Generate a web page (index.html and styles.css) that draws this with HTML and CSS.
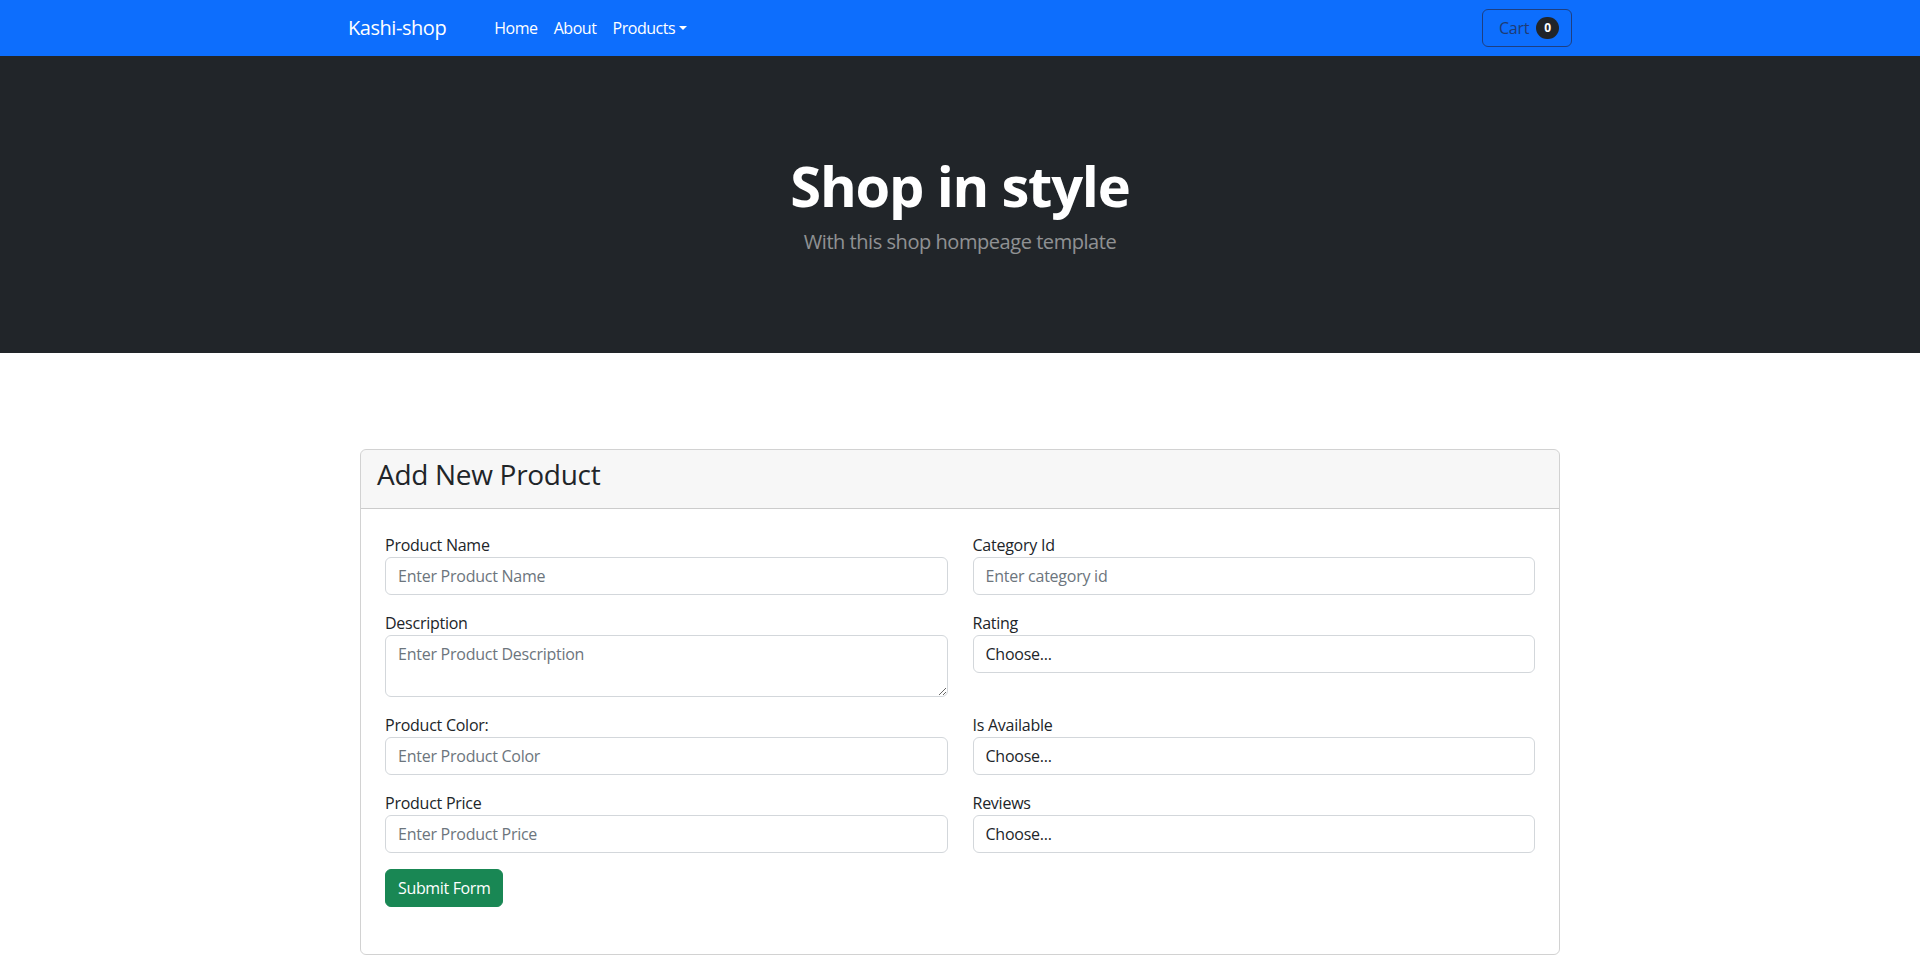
FILE: index.html
```html
<!DOCTYPE html>
<html lang="en">
<head>
<meta charset="utf-8">
<title>Kashi-shop</title>
<link rel="stylesheet" href="styles.css">
</head>
<body>
<nav class="navbar">
  <div class="nav-container">
    <a class="brand" href="#">Kashi-shop</a>
    <ul class="nav-links">
      <li><a href="#">Home</a></li>
      <li><a href="#">About</a></li>
      <li><a href="#" class="dropdown">Products</a></li>
    </ul>
    <button class="cart-btn" type="button"><span class="cart-label">Cart</span><span class="badge">0</span></button>
  </div>
</nav>

<header class="hero">
  <div class="hero-inner">
    <h1>Shop in style</h1>
    <p>With this shop hompeage template</p>
  </div>
</header>

<main class="main">
  <section class="card">
    <div class="card-header">
      <h3>Add New Product</h3>
    </div>
    <form class="card-body">
      <div class="grid">
        <div class="field">
          <label>Product Name</label>
          <input class="control" type="text" placeholder="Enter Product Name">
        </div>
        <div class="field">
          <label>Category Id</label>
          <input class="control" type="text" placeholder="Enter category id">
        </div>
        <div class="field">
          <label>Description</label>
          <textarea class="control textarea" rows="2" placeholder="Enter Product Description"></textarea>
        </div>
        <div class="field">
          <label>Rating</label>
          <select class="control select"><option>Choose...</option></select>
        </div>
        <div class="field">
          <label>Product Color:</label>
          <input class="control" type="text" placeholder="Enter Product Color">
        </div>
        <div class="field">
          <label>Is Available</label>
          <select class="control select"><option>Choose...</option></select>
        </div>
        <div class="field">
          <label>Product Price</label>
          <input class="control" type="text" placeholder="Enter Product Price">
        </div>
        <div class="field">
          <label>Reviews</label>
          <select class="control select"><option>Choose...</option></select>
        </div>
      </div>
      <div class="actions">
        <button class="submit" type="button">Submit Form</button>
      </div>
    </form>
  </section>
</main>
</body>
</html>
```

FILE: styles.css
```css
* { box-sizing: border-box; }

body {
  margin: 0;
  font-family: "Open Sans", "Noto Sans", sans-serif;
  font-size: 16px;
  line-height: 1.5;
  color: #212529;
  background: #fff;
  letter-spacing: -0.25px;
}

a { text-decoration: none; }

.navbar {
  background: #0d6efd;
  padding: 8px 0;
}

.nav-container {
  max-width: 1320px;
  margin: 0 auto;
  padding: 0 48px;
  display: flex;
  align-items: center;
}

.brand {
  color: #fff;
  font-size: 20px;
  line-height: 30px;
  padding: 5px 0;
  margin-right: 16px;
  letter-spacing: -0.45px;
}

.nav-links {
  list-style: none;
  margin: 0 0 0 24px;
  padding: 0;
  display: flex;
}

.nav-links a {
  display: block;
  color: #fff;
  padding: 8px 8px;
  line-height: 24px;
  letter-spacing: -0.45px;
}

.dropdown::after {
  content: "";
  display: inline-block;
  margin-left: 4px;
  vertical-align: 4px;
  border-top: 4.8px solid #fff;
  border-left: 4.8px solid transparent;
  border-right: 4.8px solid transparent;
}

.cart-btn {
  margin-left: auto;
  display: flex;
  align-items: center;
  height: 38px;
  padding: 6px 12px 6px 16px;
  background: transparent;
  border: 1px solid #1d3f82;
  border-radius: 6px;
  font-family: inherit;
  font-size: 16px;
  letter-spacing: -0.25px;
  color: #1f3b74;
  cursor: pointer;
}

.badge {
  margin-left: 7px;
  background: #212529;
  color: #fff;
  font-size: 12px;
  font-weight: 700;
  line-height: 1;
  padding: 5px 8px;
  border-radius: 50rem;
  letter-spacing: 0;
}

.hero {
  background: #212529;
  padding: 48px 0;
}

.hero-inner {
  margin: 48px auto;
  text-align: center;
  color: #fff;
}

.hero h1 {
  margin: 0 0 8px;
  font-size: 56px;
  font-weight: 700;
  line-height: 1.2;
  letter-spacing: -1.2px;
}

.hero p {
  margin: 0;
  font-size: 20px;
  line-height: 30px;
  color: rgba(255, 255, 255, 0.5);
  letter-spacing: -0.45px;
}

.main {
  padding: 96px 0 40px;
}

.card {
  width: 1200px;
  margin: 0 auto;
  border: 1px solid rgba(0, 0, 0, 0.175);
  border-radius: 6px;
}

.card-header {
  background: rgba(0, 0, 0, 0.03);
  padding: 8px 16px;
  border-bottom: 1px solid rgba(0, 0, 0, 0.175);
  border-radius: 5px 5px 0 0;
}

.card-header h3 {
  margin: 0 0 8px;
  font-size: 28px;
  font-weight: 500;
  line-height: 1.2;
  letter-spacing: -0.3px;
}

.card-body {
  padding: 24px 24px 47px;
}

.grid {
  display: grid;
  grid-template-columns: 1fr 1fr;
  column-gap: 25px;
  row-gap: 16px;
}

.field label {
  display: block;
  line-height: 24px;
}

.control {
  display: block;
  width: 100%;
  height: 38px;
  padding: 6px 12px;
  font-family: inherit;
  font-size: 16px;
  letter-spacing: -0.25px;
  line-height: 24px;
  color: #212529;
  background: #fff;
  border: 1px solid #d3d7db;
  border-radius: 6px;
  outline: none;
}

.control::placeholder {
  color: #6c757d;
  opacity: 1;
}

.textarea {
  height: 62px;
  resize: vertical;
}

.select {
  appearance: none;
  -webkit-appearance: none;
}

.actions {
  margin-top: 16px;
}

.submit {
  height: 38px;
  padding: 6px 12px;
  background: #198754;
  color: #fff;
  border: 1px solid #198754;
  border-radius: 6px;
  font-family: inherit;
  font-size: 16px;
  letter-spacing: -0.35px;
  line-height: 24px;
  cursor: pointer;
}
```
